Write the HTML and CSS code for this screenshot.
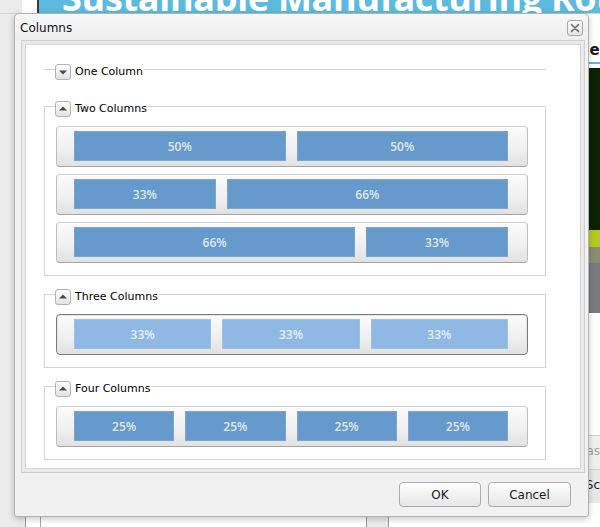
FILE: index.html
```html
<!DOCTYPE html>
<html lang="en">
<head>
<meta charset="utf-8">
<title>Columns</title>
<link rel="stylesheet" href="styles.css">
</head>
<body>
<div class="page">
  <div class="topbar">
    <div class="tb-gap"></div>
    <div class="tb-white"></div>
    <div class="tb-dark"></div>
    <div class="banner"><div class="banner-title">Sustainable Manufacturing Roundtable</div></div>
  </div>
  <div class="content">
    <div class="c-gap"></div>
    <div class="c-nav"></div>
    <div class="c-main"></div>
    <div class="c-sep"></div>
    <div class="c-side">
      <h2 class="side-head">Upcoming Activities</h2>
      <div class="side-photo"></div>
      <div class="side-space"></div>
      <div class="side-box side-box-a">Pas</div>
      <div class="side-box side-box-b">Sc</div>
    </div>
  </div>
</div>

<div class="dialog">
  <div class="dlg-title">
    <span class="dlg-title-text">Columns</span>
    <button class="close-btn" aria-label="Close">
      <svg width="14" height="14" viewBox="0 0 14 14"><path d="M3.5 3.5 L10.5 10.5 M10.5 3.5 L3.5 10.5" stroke="#6a6a6a" stroke-width="1.6" stroke-linecap="round" fill="none"/></svg>
    </button>
  </div>

  <div class="frame">
    <div class="frame-inner">

      <div class="group collapsed">
        <div class="g-head">
          <div class="g-start"></div>
          <button class="toggle" aria-label="Expand">
            <svg width="14" height="14" viewBox="0 0 14 14"><polygon points="3,5.5 11,5.5 7,9.5" fill="#4a4a4a"/></svg>
          </button>
          <span class="g-title">One Column</span>
          <div class="g-end"></div>
        </div>
      </div>

      <div class="group">
        <div class="g-head">
          <div class="g-start"></div>
          <button class="toggle" aria-label="Collapse">
            <svg width="14" height="14" viewBox="0 0 14 14"><polygon points="3,8.5 11,8.5 7,4.5" fill="#4a4a4a"/></svg>
          </button>
          <span class="g-title">Two Columns</span>
          <div class="g-end"></div>
        </div>
        <div class="g-body">
          <div class="layout">
            <div class="col w50">50%</div>
            <div class="col w50">50%</div>
          </div>
          <div class="layout">
            <div class="col w33">33%</div>
            <div class="col w66">66%</div>
          </div>
          <div class="layout">
            <div class="col w66">66%</div>
            <div class="col w33">33%</div>
          </div>
        </div>
      </div>

      <div class="group">
        <div class="g-head">
          <div class="g-start"></div>
          <button class="toggle" aria-label="Collapse">
            <svg width="14" height="14" viewBox="0 0 14 14"><polygon points="3,8.5 11,8.5 7,4.5" fill="#4a4a4a"/></svg>
          </button>
          <span class="g-title">Three Columns</span>
          <div class="g-end"></div>
        </div>
        <div class="g-body">
          <div class="layout selected">
            <div class="col w33">33%</div>
            <div class="col w33">33%</div>
            <div class="col w33">33%</div>
          </div>
        </div>
      </div>

      <div class="group">
        <div class="g-head">
          <div class="g-start"></div>
          <button class="toggle" aria-label="Collapse">
            <svg width="14" height="14" viewBox="0 0 14 14"><polygon points="3,8.5 11,8.5 7,4.5" fill="#4a4a4a"/></svg>
          </button>
          <span class="g-title">Four Columns</span>
          <div class="g-end"></div>
        </div>
        <div class="g-body">
          <div class="layout">
            <div class="col w25">25%</div>
            <div class="col w25">25%</div>
            <div class="col w25">25%</div>
            <div class="col w25">25%</div>
          </div>
        </div>
      </div>

    </div>
  </div>

  <div class="dlg-footer">
    <button class="btn btn-ok">OK</button>
    <button class="btn btn-cancel">Cancel</button>
  </div>
</div>
</body>
</html>
```
FILE: styles.css
```css
* { box-sizing: border-box; }

html, body {
  margin: 0;
  padding: 0;
  width: 600px;
  height: 527px;
  overflow: hidden;
}

body {
  background: #ebebeb;
  font-family: "DejaVu Sans", "Noto Sans", sans-serif;
}

/* ---------- page behind the dialog ---------- */
.page {
  display: flex;
  flex-direction: column;
  height: 527px;
}

.topbar {
  display: flex;
  height: 13px;
  flex: none;
}
.tb-gap { width: 22px; background: #ebebeb; }
.tb-white { width: 15px; background: #fff; }
.tb-dark { width: 2px; background: #3a3a3a; }
.banner {
  flex: 1;
  background: #5cbade;
  overflow: hidden;
  padding-left: 23px;
}
.banner-title {
  font-family: "Open Sans", sans-serif;
  font-weight: 700;
  font-size: 36px;
  line-height: 36px;
  letter-spacing: -0.3px;
  margin-top: -20px;
  color: #fff;
  white-space: nowrap;
}

.content {
  flex: 1;
  display: flex;
  border-top: 1px solid #d6d6d6;
}
.c-gap { width: 25px; background: #ebebeb; }
.c-nav {
  width: 16px;
  background: #fff;
  border-left: 1px solid #9a9a9a;
  border-right: 1px solid #a8a8a8;
}
.c-main {
  width: 326px;
  background: #fff;
  border-right: 1px solid #9a9a9a;
}
.c-sep {
  width: 22px;
  background: #ebebeb;
  border-right: 1px solid #9a9a9a;
}
.c-side {
  flex: 1;
  background: #fff;
  display: flex;
  flex-direction: column;
  overflow: hidden;
  padding-top: 26px;
}
.side-head {
  margin: 0 0 0 51px;
  font-size: 15px;
  line-height: 20px;
  font-weight: 700;
  color: #1a1a1a;
  padding-bottom: 2px;
  border-bottom: 2px solid #5cbade;
  white-space: nowrap;
}
.side-photo {
  margin-top: 4px;
  height: 245px;
  background: linear-gradient(#0b2204 0, #0b2204 162px, #b3c91e 162px, #b3c91e 179px, #8b8c72 179px, #8b8c72 195px, #797c80 195px);
}
.side-space { height: 122px; }
.side-box {
  height: 34px;
  border-top: 1px solid #cfcfcf;
  background: #f0f0f0;
  font-size: 12px;
  line-height: 30px;
  text-align: right;
  white-space: nowrap;
}
.side-box-a { color: #a0a0a0; }
.side-box-b { color: #222; background: #e8e8e8; }

/* ---------- dialog ---------- */
.dialog {
  position: absolute;
  left: 14px;
  top: 13px;
  width: 575px;
  height: 504px;
  border: 1px solid #b3b3b3;
  border-radius: 5px 5px 3px 3px;
  background: #f1f1f1;
  box-shadow: 0 2px 6px rgba(0, 0, 0, 0.22);
  display: flex;
  flex-direction: column;
}

.dlg-title {
  height: 26px;
  flex: none;
  display: flex;
  align-items: center;
  justify-content: space-between;
  padding: 1px 5px 0 5px;
  background: linear-gradient(#f7f7f7, #eeeeee);
  border-radius: 5px 5px 0 0;
}
.dlg-title-text {
  font-size: 12px;
  color: #111;
}

.close-btn {
  width: 16px;
  height: 16px;
  padding: 0;
  margin: 0;
  border: 1px solid #a9a9a9;
  border-radius: 3px;
  background: linear-gradient(#fdfdfd, #e3e3e3);
  display: flex;
  align-items: center;
  justify-content: center;
}

.frame {
  flex: none;
  margin: 0 3px 0 6px;
  height: 433px;
  border: 1px solid #cfcfcf;
  padding: 3px;
  background: #e9e9e9;
}
.frame-inner {
  height: 100%;
  border: 1px solid #d4d4d4;
  background: #fff;
  padding: 19px 0 0 18px;
}

/* ---------- groups ---------- */
.group {
  width: 502px;
  margin-bottom: 13px;
}
.group.collapsed { margin-bottom: 21px; }

.g-head {
  display: flex;
  height: 16px;
}
.g-start {
  width: 11px;
  margin-top: 5px;
  border-top: 1px solid #d3d3d3;
  border-left: 1px solid #d3d3d3;
}
.collapsed .g-start { border-left: none; }

.toggle {
  width: 16px;
  height: 16px;
  padding: 0;
  margin: 0;
  border: 1px solid #b3b3b3;
  border-radius: 3px;
  background: linear-gradient(#fefefe, #e2e2e2);
  display: flex;
  align-items: center;
  justify-content: center;
}
.g-title {
  margin-left: 4px;
  padding-right: 1px;
  font-size: 11px;
  line-height: 16px;
  color: #000;
  white-space: nowrap;
}
.g-end {
  flex: 1;
  margin-top: 5px;
  border-top: 1px solid #d3d3d3;
  border-right: 1px solid #d3d3d3;
}
.collapsed .g-end { border-right: none; }

.g-body {
  border: 1px solid #d3d3d3;
  border-top: none;
  padding: 9px 17px 12px 11px;
  display: flex;
  flex-direction: column;
  gap: 7px;
}

.layout {
  display: flex;
  gap: 11px;
  height: 41px;
  border: 1px solid #bdbdbd;
  border-top-color: #cfcfcf;
  border-bottom-color: #a4a4a4;
  border-radius: 4px;
  padding: 4px 19px 5px 17px;
  background: linear-gradient(#fbfbfb, #f0f0f0 55%, #e1e1e1);
}
.layout.selected {
  border-color: #7b7b7b;
  box-shadow: inset 0 0 0 1px #e4e4e4;
}

.col {
  background: #6699cc;
  border: 1px solid #78a5d2;
  display: flex;
  align-items: center;
  justify-content: center;
  color: #dfe8f3;
  font-family: "Open Sans", "DejaVu Sans", sans-serif;
  font-size: 12px;
  font-weight: 600;
  min-width: 0;
}
.selected .col {
  background: #8fb9e4;
  border-color: #9cc2e8;
  color: #e6eff9;
}
.w25 { flex: 25; }
.w33 { flex: 33; }
.w50 { flex: 50; }
.w66 { flex: 66; }

/* ---------- footer ---------- */
.dlg-footer {
  flex: 1;
  display: flex;
  justify-content: flex-end;
  align-items: flex-start;
  gap: 7px;
  padding: 9px 17px 0 0;
}
.btn {
  height: 25px;
  padding: 0;
  margin: 0;
  border: 1px solid #ababab;
  border-radius: 4px;
  background: linear-gradient(#fdfdfd, #e7e7e7);
  font-family: "DejaVu Sans", sans-serif;
  font-size: 12px;
  color: #1a1a1a;
}
.btn-ok { width: 82px; }
.btn-cancel { width: 83px; }
```
